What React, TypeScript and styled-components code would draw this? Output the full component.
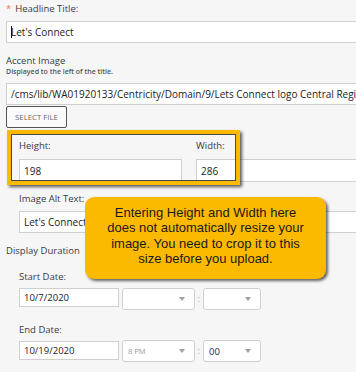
import styled, { createGlobalStyle } from "styled-components";

const GlobalStyle = createGlobalStyle`
  html, body {
    margin: 0;
    padding: 0;
    background: #f6f6f6;
  }
  body {
    font-family: "Open Sans", "DejaVu Sans", sans-serif;
    color: #333;
  }
`;

const Page = styled.div`
  position: relative;
  width: 356px;
  height: 372px;
  overflow: hidden;
  padding-left: 6px;
  box-sizing: border-box;
  display: flex;
  flex-direction: column;
`;

const Label = styled.div<{ $top: number }>`
  font-size: 9.5px;
  line-height: 14px;
  height: 14px;
  color: #3a3a42;
  margin-top: ${(p) => p.$top}px;
  white-space: nowrap;
`;

const Star = styled.span`
  color: #ec7a63;
  margin-right: 4px;
`;

const Hint = styled.div`
  font-size: 7px;
  font-weight: 600;
  line-height: 8px;
  color: #555;
`;

const TextBox = styled.div<{ $top: number; $h?: number; $flush?: boolean }>`
  box-sizing: border-box;
  height: ${(p) => p.$h ?? 22}px;
  margin-top: ${(p) => p.$top}px;
  margin-right: ${(p) => (p.$flush ? 0 : -20)}px;
  background: #fff;
  border: 1px solid #cfcfcf;
  font-size: 10px;
  line-height: 20px;
  padding-left: 4px;
  color: #222;
  white-space: nowrap;
  overflow: hidden;
  display: flex;
  align-items: center;
`;

const Caret = styled.span`
  display: inline-block;
  width: 1px;
  height: 12px;
  background: #111;
  margin-right: -1px;
`;

const FileButton = styled.div`
  box-sizing: border-box;
  width: 61px;
  height: 22px;
  margin-top: 1px;
  border: 1px solid #555;
  border-radius: 2px;
  background: #fafafa;
  font-size: 7.8px;
  color: #666;
  display: flex;
  align-items: center;
  justify-content: center;
`;

const DimSection = styled.div`
  position: relative;
  padding-left: 13px;
  display: grid;
  grid-template-columns: 163px 1fr;
  column-gap: 14px;
`;

const DimField = styled.div`
  display: flex;
  flex-direction: column;
`;

const Highlight = styled.div`
  position: absolute;
  left: 1px;
  top: 2px;
  width: 233px;
  height: 55px;
  box-sizing: border-box;
  border: 4px solid #fbb900;
  box-shadow: inset 0 0 0 1px #4a4a4a, 2px 2px 3px rgba(0, 0, 0, 0.65);
  pointer-events: none;
`;

const Indented = styled.div`
  padding-left: 13px;
  display: flex;
  flex-direction: column;
`;

const DateRow = styled.div<{ $top: number }>`
  display: flex;
  align-items: flex-start;
  gap: 3px;
  margin-top: ${(p) => p.$top}px;
`;

const DateBox = styled.div<{ $drop?: number }>`
  box-sizing: border-box;
  width: 100px;
  height: 19px;
  margin-top: ${(p) => p.$drop ?? 0}px;
  background: #fff;
  border: 1px solid #cfcfcf;
  font-size: 9.5px;
  color: #222;
  padding-left: 4px;
  display: flex;
  align-items: center;
`;

const TimePair = styled.div`
  display: flex;
  align-items: flex-start;
`;

const Select = styled.div<{ $w: number; $muted?: boolean }>`
  box-sizing: border-box;
  position: relative;
  width: ${(p) => p.$w}px;
  height: 22px;
  background: #fff;
  border: 1px solid #cfcfcf;
  border-radius: 3px;
  padding-left: 5px;
  font-size: ${(p) => (p.$muted ? 7.5 : 9.5)}px;
  color: ${(p) => (p.$muted ? "#999" : "#1c1c5c")};
  display: flex;
  align-items: center;

  &::after {
    content: "";
    position: absolute;
    right: 9px;
    top: 8px;
    border-left: 3px solid transparent;
    border-right: 3px solid transparent;
    border-top: 4px solid #a0a0a0;
  }
`;

const Colon = styled.span`
  width: 8px;
  text-align: center;
  font-size: 9px;
  line-height: 22px;
  color: #d2a56f;
`;

const Callout = styled.div`
  position: absolute;
  left: 85px;
  top: 197px;
  width: 241px;
  height: 82px;
  box-sizing: border-box;
  padding: 8px 4px 0;
  background: #fbb900;
  border-radius: 9px;
  box-shadow: 2px 2px 3px rgba(0, 0, 0, 0.6);
  font-family: "Liberation Sans", Arial, sans-serif;
  font-size: 13px;
  line-height: 15.4px;
  color: #1a1a1a;
  text-align: center;
  white-space: nowrap;
`;

export default function App() {
  return (
    <>
      <GlobalStyle />
      <Page>
        <Label $top={2}>
          <Star>*</Star>Headline Title:
        </Label>
        <TextBox $top={5}>
          <Caret />
          Let's Connect
        </TextBox>

        <Label $top={11}>Accent Image</Label>
        <Hint>Displayed to the left of the title.</Hint>
        <TextBox $top={7}>
          /cms/lib/WA01920133/Centricity/Domain/9/Lets Connect logo Central Regi
        </TextBox>
        <FileButton>SELECT FILE</FileButton>

        <DimSection>
          <DimField>
            <Label $top={11}>Height:</Label>
            <TextBox $top={6} $h={23} $flush>
              198
            </TextBox>
          </DimField>
          <DimField>
            <Label $top={11}>Width:</Label>
            <TextBox $top={6} $h={23}>
              286
            </TextBox>
          </DimField>
          <Highlight />
        </DimSection>

        <Indented>
          <Label $top={10}>Image Alt Text:</Label>
          <TextBox $top={5}>Let's Connect</TextBox>
        </Indented>

        <Label $top={11}>Display Duration</Label>

        <Indented>
          <Label $top={12}>Start Date:</Label>
          <DateRow $top={4}>
            <DateBox>10/7/2020</DateBox>
            <TimePair>
              <Select $w={73} />
              <Colon>:</Colon>
              <Select $w={58} />
            </TimePair>
          </DateRow>

          <Label $top={13}>End Date:</Label>
          <DateRow $top={3}>
            <DateBox $drop={1}>10/19/2020</DateBox>
            <TimePair>
              <Select $w={73} $muted>
                8 PM
              </Select>
              <Colon>:</Colon>
              <Select $w={58}>00</Select>
            </TimePair>
          </DateRow>
        </Indented>

        <Callout>
          Entering Height and Width here
          <br />
          does not automatically resize your
          <br />
          image. You need to crop it to this
          <br />
          size before you upload.
        </Callout>
      </Page>
    </>
  );
}
